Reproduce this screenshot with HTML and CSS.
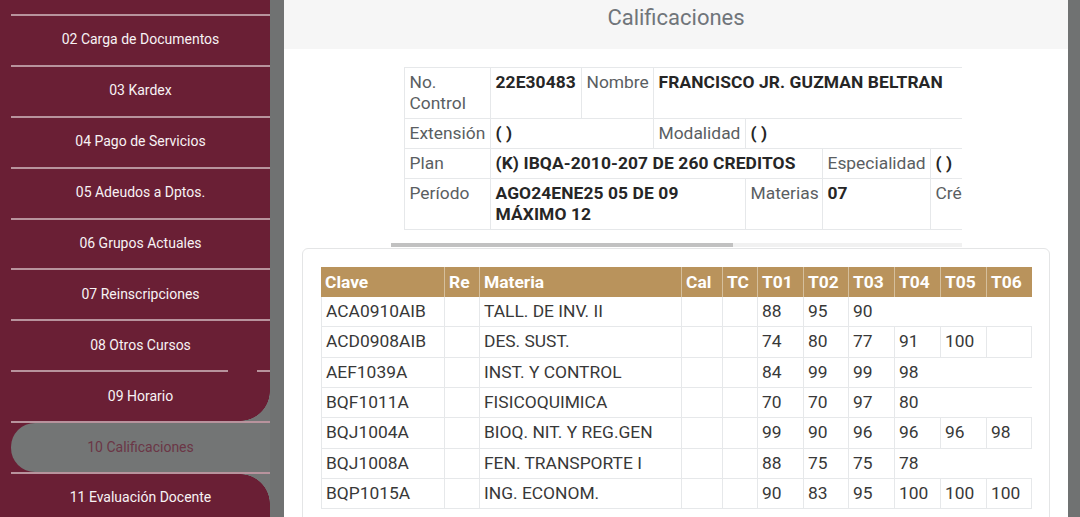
FILE: index.html
```html
<!DOCTYPE html>
<html lang="es">
<head>
<meta charset="utf-8">
<title>Calificaciones</title>
<link rel="stylesheet" href="styles.css">
</head>
<body>
<div class="app">
  <aside class="sidebar">
    <div class="nav-clip"></div>
    <div class="sep"></div>
    <div class="nav-item">02 Carga de Documentos</div>
    <div class="sep"></div>
    <div class="nav-item">03 Kardex</div>
    <div class="sep"></div>
    <div class="nav-item">04 Pago de Servicios</div>
    <div class="sep"></div>
    <div class="nav-item">05 Adeudos a Dptos.</div>
    <div class="sep"></div>
    <div class="nav-item">06 Grupos Actuales</div>
    <div class="sep"></div>
    <div class="nav-item">07 Reinscripciones</div>
    <div class="sep"></div>
    <div class="nav-item">08 Otros Cursos</div>
    <div class="sep sep--gap"></div>
    <div class="nav-item nav-item--pre">09 Horario</div>
    <div class="sep"></div>
    <div class="nav-item nav-item--active"><span class="pill">10 Calificaciones</span></div>
    <div class="sep"></div>
    <div class="nav-item nav-item--post">11 Evaluación Docente</div>
  </aside>
  <div class="gutter"></div>
  <main class="modal">
    <header class="modal-header"><h1 class="modal-title">Calificaciones</h1></header>
    <div class="modal-body">
      <div class="info-scroll">
        <div class="info-wrap">
          <div class="info-grid">
            <div class="cell lbl">No.<br>Control</div>
            <div class="cell val">22E30483</div>
            <div class="cell lbl">Nombre</div>
            <div class="cell val span-4-end">FRANCISCO JR. GUZMAN BELTRAN</div>

            <div class="cell lbl">Extensión</div>
            <div class="cell val span-2-4">( )</div>
            <div class="cell lbl">Modalidad</div>
            <div class="cell val span-5-end">( )</div>

            <div class="cell lbl">Plan</div>
            <div class="cell val span-2-6">(K) IBQA-2010-207 DE 260 CREDITOS</div>
            <div class="cell lbl">Especialidad</div>
            <div class="cell val">( )</div>

            <div class="cell lbl">Período</div>
            <div class="cell val span-2-5">AGO24ENE25 05 DE 09 MÁXIMO 12</div>
            <div class="cell lbl">Materias</div>
            <div class="cell val">07</div>
            <div class="cell lbl">Créditos</div>
          </div>
        </div>
        <div class="scrollbar"><div class="scrollbar-thumb"></div></div>
      </div>

      <div class="card">
        <table class="grades">
          <colgroup>
            <col class="w-clave"><col class="w-re"><col class="w-materia"><col class="w-cal"><col class="w-tc">
            <col class="w-t"><col class="w-t2"><col class="w-t"><col class="w-t"><col class="w-t"><col class="w-t">
          </colgroup>
          <thead>
            <tr><th>Clave</th><th>Re</th><th>Materia</th><th>Cal</th><th>TC</th><th>T01</th><th>T02</th><th>T03</th><th>T04</th><th>T05</th><th>T06</th></tr>
          </thead>
          <tbody>
            <tr><td>ACA0910AIB</td><td></td><td>TALL. DE INV. II</td><td></td><td></td><td>88</td><td>95</td><td>90</td><td class="x"></td><td class="x"></td><td class="x"></td></tr>
            <tr><td>ACD0908AIB</td><td></td><td>DES. SUST.</td><td></td><td></td><td>74</td><td>80</td><td>77</td><td>91</td><td>100</td><td class="end"></td></tr>
            <tr><td>AEF1039A</td><td></td><td>INST. Y CONTROL</td><td></td><td></td><td>84</td><td>99</td><td>99</td><td>98</td><td class="x"></td><td class="x"></td></tr>
            <tr><td>BQF1011A</td><td></td><td>FISICOQUIMICA</td><td></td><td></td><td>70</td><td>70</td><td>97</td><td>80</td><td class="x"></td><td class="x"></td></tr>
            <tr><td>BQJ1004A</td><td></td><td>BIOQ. NIT. Y REG.GEN</td><td></td><td></td><td>99</td><td>90</td><td>96</td><td>96</td><td>96</td><td class="end">98</td></tr>
            <tr><td>BQJ1008A</td><td></td><td>FEN. TRANSPORTE I</td><td></td><td></td><td>88</td><td>75</td><td>75</td><td>78</td><td class="x"></td><td class="x"></td></tr>
            <tr><td>BQP1015A</td><td></td><td>ING. ECONOM.</td><td></td><td></td><td>90</td><td>83</td><td>95</td><td>100</td><td>100</td><td class="end">100</td></tr>
          </tbody>
        </table>
      </div>
    </div>
  </main>
  <div class="gutter-right"></div>
</div>
</body>
</html>
```

FILE: styles.css
```css
* { box-sizing: border-box; }

html, body {
  margin: 0;
  padding: 0;
  height: 517px;
  overflow: hidden;
  font-family: Roboto, "Noto Sans", "Liberation Sans", sans-serif;
}

.app {
  display: flex;
  height: 517px;
  background: #707272;
}

/* ---------- Sidebar ---------- */
.sidebar {
  width: 270px;
  flex: none;
  background: #6a1f35;
  padding-left: 11px;
  display: flex;
  flex-direction: column;
}

.nav-clip { height: 14px; flex: none; }

.sep {
  height: 2px;
  flex: none;
  background: #b8939d;
}

.sep--gap {
  background: linear-gradient(to right, #b8939d 0 217px, transparent 217px 246px, #b8939d 246px);
}

.nav-item {
  position: relative;
  height: 48.9px;
  flex: none;
  display: flex;
  align-items: center;
  justify-content: center;
  padding-bottom: 2px;
  color: #f7f2f4;
  font-size: 14px;
  background: #6a1f35;
}

.nav-item--pre::after {
  content: "";
  position: absolute;
  right: 0;
  bottom: 0;
  width: 30px;
  height: 30px;
  background: radial-gradient(circle at 0 0, #6a1f35 29.5px, #737575 30px);
}

.nav-item--post::before {
  content: "";
  position: absolute;
  right: 0;
  top: 0;
  width: 30px;
  height: 30px;
  background: radial-gradient(circle at 0 100%, #6a1f35 29.5px, #737575 30px);
}

.nav-item--active { padding-bottom: 0; }

.pill {
  width: 100%;
  height: 100%;
  display: flex;
  align-items: center;
  justify-content: center;
  padding-bottom: 2px;
  background: #737575;
  border-radius: 24px 0 0 24px;
  color: #6b3646;
}

.gutter { width: 14px; flex: none; }
.gutter-right { width: 12px; flex: none; }

/* ---------- Modal ---------- */
.modal {
  width: 784px;
  flex: none;
  background: #ffffff;
  display: flex;
  flex-direction: column;
}

.modal-header {
  height: 49px;
  flex: none;
  background: #f6f6f6;
  padding-top: 4px;
  text-align: center;
}

.modal-title {
  margin: 0;
  font-size: 22px;
  line-height: 28px;
  font-weight: 400;
  color: #70757a;
}

.modal-body {
  padding: 18px 18px 0;
}

.info-scroll {
  width: 571px;
  margin: 0 auto 1px;
}

.info-wrap {
  overflow: hidden;
  padding: 0 0 13px 13px;
}

.info-grid {
  display: grid;
  width: max-content;
  grid-template-columns: 86px 91px 72px 92px 77px 108px 300px;
  border-top: 1px solid #e6e8ea;
  border-left: 1px solid #e6e8ea;
  font-size: 17.4px;
  line-height: 21px;
}

.cell {
  padding: 4px 5px;
  border-right: 1px solid #e6e8ea;
  border-bottom: 1px solid #e6e8ea;
}

.lbl { color: #5a5e62; }
.val { color: #262626; font-weight: 700; letter-spacing: 0.1px; }

.span-4-end { grid-column: 4 / -1; }
.span-5-end { grid-column: 5 / -1; }
.span-2-4 { grid-column: 2 / 4; }
.span-2-5 { grid-column: 2 / 5; }
.span-2-6 { grid-column: 2 / 6; }

.scrollbar {
  height: 4px;
  background: #f1f1f1;
}

.scrollbar-thumb {
  width: 342px;
  height: 4px;
  background: #c1c1c1;
}

/* ---------- Card / grades ---------- */
.card {
  border: 1px solid #e4e5e6;
  border-radius: 6px;
  padding: 18px 18px 40px;
}

.grades {
  table-layout: fixed;
  width: 711px;
  border-collapse: separate;
  border-spacing: 0;
  font-size: 17.4px;
  color: #383838;
}

.w-clave { width: 123px; }
.w-re { width: 35px; }
.w-materia { width: 202px; }
.w-cal { width: 41px; }
.w-tc { width: 35px; }
.w-t { width: 46px; }
.w-t2 { width: 45px; }

.grades th {
  background: #b9935c;
  color: #ffffff;
  font-weight: 700;
  text-align: left;
  padding: 5px 3px 5px 4px;
  line-height: 20px;
  border-left: 1px solid #d5bf9c;
  white-space: nowrap;
}

.grades th:first-child { border-left: none; }

.grades td {
  padding: 5px 5px 5px 4px;
  line-height: 19.35px;
  border-left: 1px solid #e6e8ea;
  border-bottom: 1px solid #e6e8ea;
  white-space: nowrap;
  overflow: hidden;
}

.grades td.x { border-left: none; }
.grades td.end { border-right: 1px solid #e6e8ea; }
```
